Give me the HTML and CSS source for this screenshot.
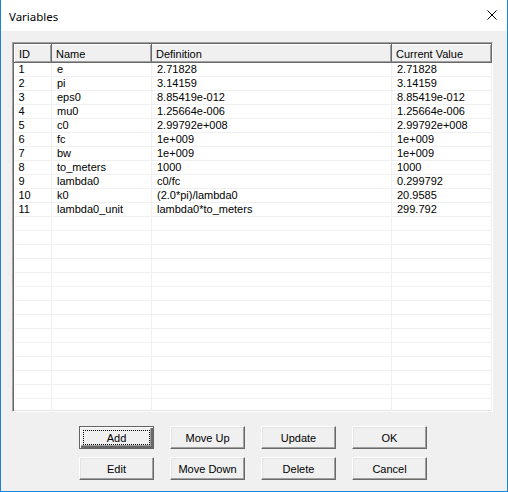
FILE: index.html
```html
<!DOCTYPE html>
<html lang="en">
<head>
    <meta charset="UTF-8">
    <title>Variables</title>
    <link rel="stylesheet" href="styles.css">
</head>
<body>
    <div class="window">
        <div class="titlebar">
            <span class="title">Variables</span>
            <svg class="close" width="10" height="10" viewBox="0 0 10 10">
                <path d="M0.5 0.5 L9.5 9.5 M9.5 0.5 L0.5 9.5" stroke="#000" stroke-width="1"/>
            </svg>
        </div>
        <div class="content">
            <div class="list">
                <table>
                    <colgroup>
                        <col style="width:37px">
                        <col style="width:100px">
                        <col style="width:240px">
                        <col style="width:100px">
                        <col>
                    </colgroup>
                    <thead>
                        <tr>
                            <th>ID</th>
                            <th>Name</th>
                            <th>Definition</th>
                            <th>Current Value</th>
                            <th class="filler"></th>
                        </tr>
                    </thead>
                    <tbody>
                        <tr><td>1</td><td>e</td><td>2.71828</td><td>2.71828</td><td></td></tr>
                        <tr><td>2</td><td>pi</td><td>3.14159</td><td>3.14159</td><td></td></tr>
                        <tr><td>3</td><td>eps0</td><td>8.85419e-012</td><td>8.85419e-012</td><td></td></tr>
                        <tr><td>4</td><td>mu0</td><td>1.25664e-006</td><td>1.25664e-006</td><td></td></tr>
                        <tr><td>5</td><td>c0</td><td>2.99792e+008</td><td>2.99792e+008</td><td></td></tr>
                        <tr><td>6</td><td>fc</td><td>1e+009</td><td>1e+009</td><td></td></tr>
                        <tr><td>7</td><td>bw</td><td>1e+009</td><td>1e+009</td><td></td></tr>
                        <tr><td>8</td><td>to_meters</td><td>1000</td><td>1000</td><td></td></tr>
                        <tr><td>9</td><td>lambda0</td><td>c0/fc</td><td>0.299792</td><td></td></tr>
                        <tr><td>10</td><td>k0</td><td>(2.0*pi)/lambda0</td><td>20.9585</td><td></td></tr>
                        <tr><td>11</td><td>lambda0_unit</td><td>lambda0*to_meters</td><td>299.792</td><td></td></tr>
                        <tr><td></td><td></td><td></td><td></td><td></td></tr>
                        <tr><td></td><td></td><td></td><td></td><td></td></tr>
                        <tr><td></td><td></td><td></td><td></td><td></td></tr>
                        <tr><td></td><td></td><td></td><td></td><td></td></tr>
                        <tr><td></td><td></td><td></td><td></td><td></td></tr>
                        <tr><td></td><td></td><td></td><td></td><td></td></tr>
                        <tr><td></td><td></td><td></td><td></td><td></td></tr>
                        <tr><td></td><td></td><td></td><td></td><td></td></tr>
                        <tr><td></td><td></td><td></td><td></td><td></td></tr>
                        <tr><td></td><td></td><td></td><td></td><td></td></tr>
                        <tr><td></td><td></td><td></td><td></td><td></td></tr>
                        <tr><td></td><td></td><td></td><td></td><td></td></tr>
                        <tr><td></td><td></td><td></td><td></td><td></td></tr>
                        <tr class="last"><td></td><td></td><td></td><td></td><td></td></tr>
                    </tbody>
                </table>
            </div>
            <div class="buttons">
                <button class="default"><span class="focus">Add</span></button>
                <button>Move Up</button>
                <button>Update</button>
                <button>OK</button>
                <button>Edit</button>
                <button>Move Down</button>
                <button>Delete</button>
                <button>Cancel</button>
            </div>
        </div>
    </div>
</body>
</html>
```

FILE: styles.css
```css
html, body {
    margin: 0;
    padding: 0;
}
body {
    width: 508px;
    height: 492px;
    overflow: hidden;
    background: #f0f0f0;
}
.window {
    box-sizing: border-box;
    width: 508px;
    height: 492px;
    border: 1px solid #1883d7;
    border-top: none;
    background: #f0f0f0;
    display: flex;
    flex-direction: column;
}
.titlebar {
    height: 31px;
    background: #fff;
    display: flex;
    align-items: center;
    justify-content: space-between;
    padding: 0 10px 0 8px;
}
.title {
    font-family: "Noto Sans", sans-serif;
    font-size: 11.5px;
    color: #000;
    margin-top: 1px;
}
.close {
    display: block;
    margin-top: -2px;
}
.content {
    padding: 11px 13px 0 11px;
    font-family: "Liberation Sans", Arial, sans-serif;
    font-size: 11px;
    color: #000;
}
.list {
    box-sizing: border-box;
    height: 370px;
    width: 481px;
    background: #fff;
    border: 1px solid;
    border-color: #a0a0a0 #fff #fff #a0a0a0;
    box-shadow: inset 1px 1px 0 #696969, inset -1px -1px 0 #e3e3e3;
    padding: 1px;
    overflow: hidden;
}
table {
    border-collapse: collapse;
    table-layout: fixed;
    width: 477px;
}
th {
    box-sizing: border-box;
    height: 18px;
    padding: 0 0 0 4px;
    text-align: left;
    font-weight: normal;
    background: #f0f0f0;
    border-top: 1px solid #fff;
    border-left: 1px solid #fff;
    box-shadow: inset -1px -1px 0 #a0a0a0;
    border-right: 1px solid #696969;
    border-bottom: 1px solid #696969;
    white-space: nowrap;
    overflow: hidden;
}
th.filler {
    border-right: none;
    box-shadow: inset 0 -1px 0 #a0a0a0;
}
td {
    height: 13px;
    padding: 0 0 0 5px;
    border-right: 1px solid #f0f0f0;
    border-bottom: 1px solid #f0f0f0;
    white-space: nowrap;
    overflow: hidden;
    line-height: 13px;
}
td:first-child {
    padding-left: 4px;
}
td:last-child {
    border-right: none;
}
tr.last td {
    border-bottom: none;
}
.buttons {
    display: grid;
    grid-template-columns: repeat(4, 75px);
    grid-auto-rows: 23px;
    column-gap: 16px;
    row-gap: 8px;
    justify-content: center;
    margin-top: 14px;
    margin-left: 0;
}
button {
    box-sizing: border-box;
    font-family: "Liberation Sans", Arial, sans-serif;
    font-size: 11px;
    color: #000;
    background: #f0f0f0;
    border: 1px solid;
    border-color: #fff #696969 #696969 #fff;
    box-shadow: inset -1px -1px 0 #a0a0a0, inset 1px 1px 0 #e3e3e3;
    padding: 0;
    margin: 0;
    cursor: pointer;
}
button.default {
    border: 1px solid #646464;
    box-shadow: inset 1px 1px 0 #fff, inset -2px -2px 0 #696969, inset -3px -3px 0 #a0a0a0;
    padding: 3px;
}
.focus {
    display: flex;
    align-items: center;
    justify-content: center;
    height: 100%;
    box-sizing: border-box;
    border: 1px dotted #000;
}
```
